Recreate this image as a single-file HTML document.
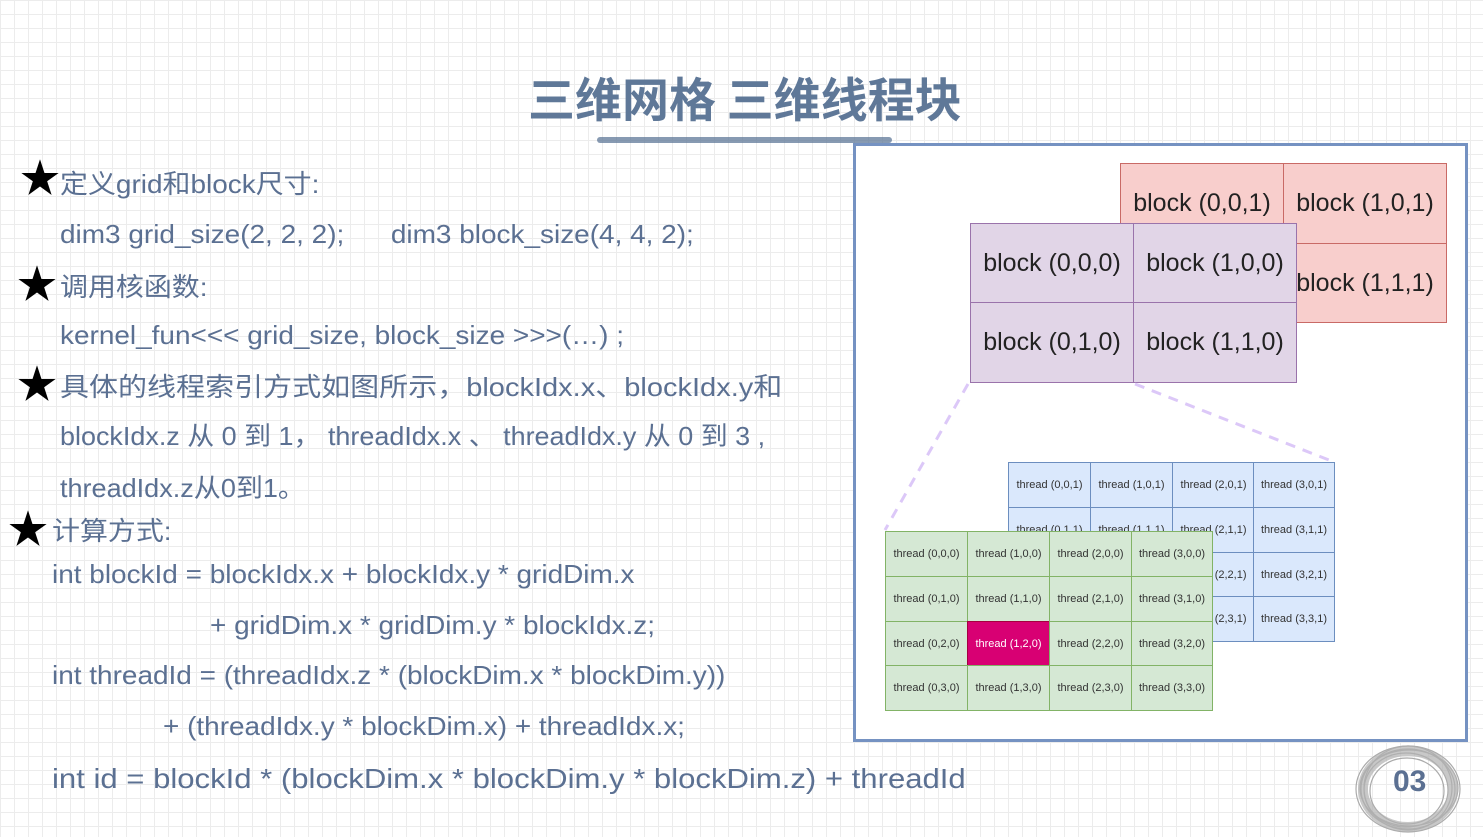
<!DOCTYPE html><html><head><meta charset="utf-8"><style>
body{margin:0;width:1483px;height:837px;overflow:hidden;position:relative;font-family:"Liberation Sans","Noto Sans CJK SC",sans-serif;
background-color:#fff;background-image:linear-gradient(#ececec 1px,transparent 1px),linear-gradient(90deg,#ececec 1px,transparent 1px);background-size:14px 14px;}
.t{position:absolute;color:#5b7092;font-size:26px;white-space:nowrap;transform-origin:0 50%;transform:scaleX(1.075);}
.s{position:absolute;font-size:40px;color:#000;}
.title{position:absolute;left:528px;top:62px;font-size:47px;font-weight:bold;color:#5f7898;font-family:"Noto Sans CJK SC",sans-serif;}
.frame{position:absolute;left:853px;top:143px;width:609px;height:593px;border:3px solid #7592c2;background:#fff;}
.c{position:absolute;box-sizing:border-box;display:flex;align-items:center;justify-content:center;white-space:nowrap;color:#222;}
.r{background:#f8cecc;border:1px solid #c96a66;font-size:25px;}
.p{background:#e1d5e7;border:1px solid #9a73ab;font-size:25px;}
.b{background:#dae8fc;border:1px solid #6c8ebf;font-size:11px;color:#333;}
.g{background:#d5e8d4;border:1px solid #82b366;font-size:11px;color:#333;}
</style></head><body>
<div class="title">三维网格 三维线程块</div>
<div style="position:absolute;left:597px;top:137px;width:295px;height:6px;background:#5f7898;opacity:.75;border-radius:3px"></div>
<div class="s" style="left:20px;top:146px">★</div>
<div class="t" style="left:60px;top:164px">定义grid和block尺寸:</div>
<div class="t" style="left:60px;top:219px">dim3 grid_size(2, 2, 2);&nbsp;&nbsp;&nbsp;&nbsp;&nbsp;&nbsp;dim3 block_size(4, 4, 2);</div>
<div class="s" style="left:17px;top:252px">★</div>
<div class="t" style="left:60px;top:267px">调用核函数:</div>
<div class="t" style="left:60px;top:320px">kernel_fun<<< grid_size, block_size >>>(…) ;</div>
<div class="s" style="left:17px;top:352px">★</div>
<div class="t" style="left:60px;top:367px;transform:scaleX(1.116)">具体的线程索引方式如图所示，blockIdx.x、blockIdx.y和</div>
<div class="t" style="left:60px;top:416px;transform:scaleX(1.036)">blockIdx.z 从 0 到 1， threadIdx.x 、 threadIdx.y 从 0 到 3 ,</div>
<div class="t" style="left:60px;top:468px;transform:scaleX(1.04)">threadIdx.z从0到1。</div>
<div class="s" style="left:8px;top:497px">★</div>
<div class="t" style="left:52px;top:511px">计算方式:</div>
<div class="t" style="left:52px;top:559px">int blockId = blockIdx.x + blockIdx.y * gridDim.x</div>
<div class="t" style="left:210px;top:610px">+ gridDim.x * gridDim.y * blockIdx.z;</div>
<div class="t" style="left:52px;top:660px">int threadId = (threadIdx.z * (blockDim.x * blockDim.y))</div>
<div class="t" style="left:163px;top:711px">+ (threadIdx.y * blockDim.x) + threadIdx.x;</div>
<div class="t" style="left:52px;top:763px;font-size:28px;transform:scaleX(1.11)">int id = blockId * (blockDim.x * blockDim.y * blockDim.z) + threadId</div>
<div class="frame"></div>
<div class="c r" style="left:1120px;top:163px;width:164px;height:81px">block (0,0,1)</div>
<div class="c r" style="left:1283px;top:163px;width:164px;height:81px">block (1,0,1)</div>
<div class="c r" style="left:1120px;top:243px;width:164px;height:80px"></div>
<div class="c r" style="left:1283px;top:243px;width:164px;height:80px">block (1,1,1)</div>
<div class="c p" style="left:970px;top:223px;width:164px;height:80px">block (0,0,0)</div>
<div class="c p" style="left:1133px;top:223px;width:164px;height:80px">block (1,0,0)</div>
<div class="c p" style="left:970px;top:302px;width:164px;height:81px">block (0,1,0)</div>
<div class="c p" style="left:1133px;top:302px;width:164px;height:81px">block (1,1,0)</div>
<svg style="position:absolute;left:0;top:0" width="1483" height="837"><g stroke="#dcc8f8" stroke-width="3" stroke-dasharray="10,8"><line x1="968" y1="384" x2="885" y2="530"/><line x1="1135" y1="384" x2="1334" y2="462"/></g></svg>
<div style="position:absolute;left:1008px;top:462px">
<div class="c b" style="left:0;top:0;width:83px;height:46px">thread (0,0,1)</div><div class="c b" style="left:82px;top:0;width:83px;height:46px">thread (1,0,1)</div><div class="c b" style="left:164px;top:0;width:83px;height:46px">thread (2,0,1)</div><div class="c b" style="left:245px;top:0;width:82px;height:46px">thread (3,0,1)</div>
<div class="c b" style="left:0;top:45px;width:83px;height:46px">thread (0,1,1)</div><div class="c b" style="left:82px;top:45px;width:83px;height:46px">thread (1,1,1)</div><div class="c b" style="left:164px;top:45px;width:83px;height:46px">thread (2,1,1)</div><div class="c b" style="left:245px;top:45px;width:82px;height:46px">thread (3,1,1)</div>
<div class="c b" style="left:164px;top:90px;width:83px;height:45px">thread (2,2,1)</div><div class="c b" style="left:245px;top:90px;width:82px;height:45px">thread (3,2,1)</div>
<div class="c b" style="left:164px;top:134px;width:83px;height:46px">thread (2,3,1)</div><div class="c b" style="left:245px;top:134px;width:82px;height:46px">thread (3,3,1)</div>
</div>
<div style="position:absolute;left:885px;top:531px">
<div class="c g" style="left:0;top:0;width:83px;height:46px">thread (0,0,0)</div><div class="c g" style="left:82px;top:0;width:83px;height:46px">thread (1,0,0)</div><div class="c g" style="left:164px;top:0;width:83px;height:46px">thread (2,0,0)</div><div class="c g" style="left:246px;top:0;width:82px;height:46px">thread (3,0,0)</div>
<div class="c g" style="left:0;top:45px;width:83px;height:46px">thread (0,1,0)</div><div class="c g" style="left:82px;top:45px;width:83px;height:46px">thread (1,1,0)</div><div class="c g" style="left:164px;top:45px;width:83px;height:46px">thread (2,1,0)</div><div class="c g" style="left:246px;top:45px;width:82px;height:46px">thread (3,1,0)</div>
<div class="c g" style="left:0;top:90px;width:83px;height:45px">thread (0,2,0)</div><div class="c" style="left:82px;top:90px;width:83px;height:45px;background:#d80073;color:#fff;font-size:11px;border:1px solid #a50040">thread (1,2,0)</div><div class="c g" style="left:164px;top:90px;width:83px;height:45px">thread (2,2,0)</div><div class="c g" style="left:246px;top:90px;width:82px;height:45px">thread (3,2,0)</div>
<div class="c g" style="left:0;top:134px;width:83px;height:46px">thread (0,3,0)</div><div class="c g" style="left:82px;top:134px;width:83px;height:46px">thread (1,3,0)</div><div class="c g" style="left:164px;top:134px;width:83px;height:46px">thread (2,3,0)</div><div class="c g" style="left:246px;top:134px;width:82px;height:46px">thread (3,3,0)</div>
</div>
<svg style="position:absolute;left:1350px;top:742px" width="115" height="95"><g fill="none" stroke="#aaa" stroke-width="1.2"><ellipse cx="58" cy="47" rx="52" ry="43"/><ellipse cx="58" cy="47" rx="47" ry="40"/><ellipse cx="56" cy="48" rx="42" ry="37"/><ellipse cx="59" cy="46" rx="49" ry="38"/><ellipse cx="57" cy="49" rx="37" ry="33"/><ellipse cx="58" cy="46" rx="44" ry="42"/></g><g fill="none" stroke="#b0b0b0" stroke-width="10" opacity=".7"><ellipse cx="58" cy="47" rx="45" ry="38"/></g></svg>
<div style="position:absolute;left:1393px;top:765px;font-size:30px;font-weight:bold;color:#5b7092">03</div>
</body></html>
